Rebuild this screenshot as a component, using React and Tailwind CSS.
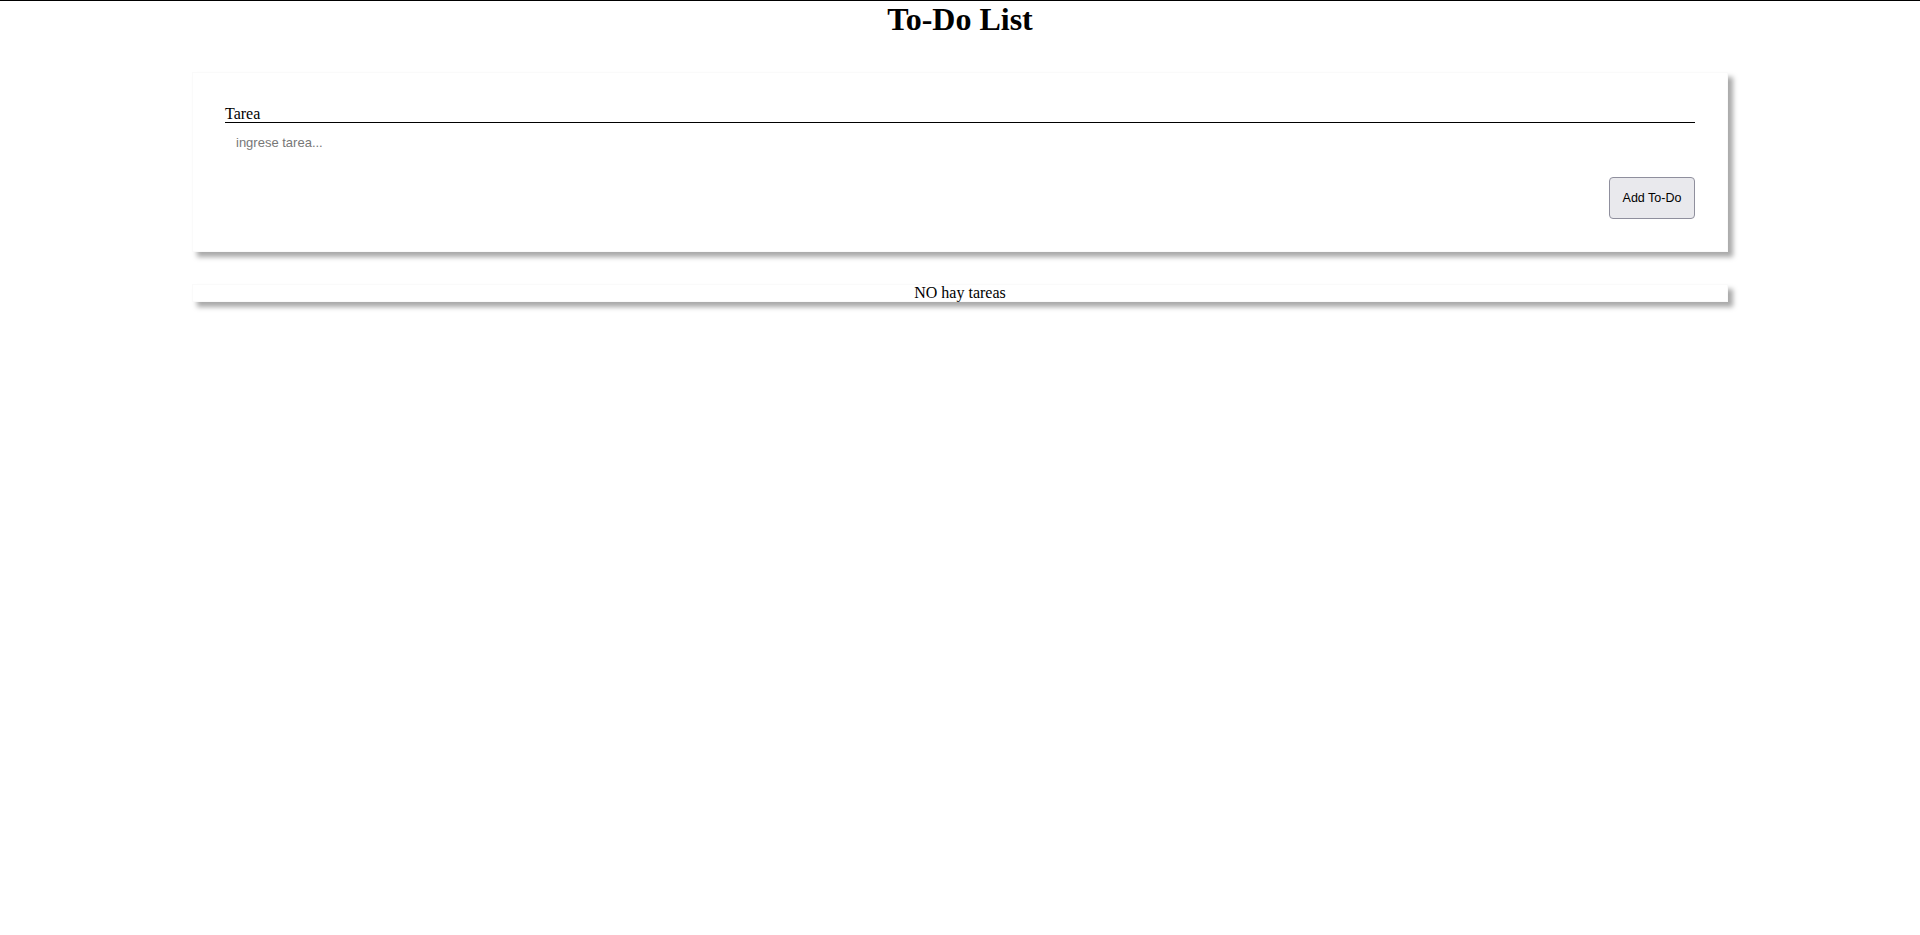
function App() {
  return (
    <div className="min-h-[935px] bg-white border-t border-black font-['Liberation_Serif',serif] text-black">
      <h1 className="m-0 text-center text-[32px] font-bold leading-[37px]">To-Do List</h1>

      <div className="mx-[192px] mt-[34px] p-8 bg-white border border-[#fafafa] shadow-[5px_5px_5px_#a9a9a9]">
        <label className="block text-base leading-[17px] border-b-[1.5px] border-black">Tarea</label>
        <input
          type="text"
          placeholder="ingrese tarea..."
          className="
            block
            w-full
            h-[38px]
            px-[11px]
            text-[13px]
            font-['Liberation_Sans',sans-serif]
            outline-none
            bg-transparent
            placeholder:text-[#777]
          "
        />
        <div className="flex justify-end mt-4">
          <button
            className="
              w-[86px]
              h-[42px]
              bg-[#e9e9ed]
              border
              border-[#8f8f9d]
              rounded-[4px]
              text-[12.5px]
              font-['Liberation_Sans',sans-serif]
            ">
            Add To-Do
          </button>
        </div>
      </div>

      <div className="mx-[192px] mt-[32px] h-[18px] bg-white border border-[#fafafa] shadow-[5px_5px_5px_#a9a9a9] text-center text-base leading-[15px]">
        NO hay tareas
      </div>
    </div>
  );
}

export default App;
